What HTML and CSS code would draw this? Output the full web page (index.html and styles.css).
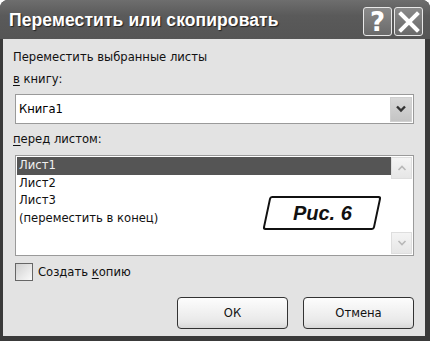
FILE: index.html
```html
<!DOCTYPE html>
<html lang="ru">
<head>
  <meta charset="UTF-8" />
  <title>Переместить или скопировать</title>
  <link rel="stylesheet" href="styles.css">
</head>
<body>

<div class="window">
  <!-- Заголовок -->
  <div class="titlebar">
    <span class="title">Переместить или скопировать</span>
    <div class="title-btns">
      <span class="tbtn">?</span>
      <span class="tbtn">
        <svg width="22" height="22" viewBox="0 0 22 22"><path d="M3 3 L19 19 M19 3 L3 19" stroke="#fff" stroke-width="4" stroke-linecap="square"/></svg>
      </span>
    </div>
  </div>

  <div class="client">
    <p class="label">Переместить выбранные листы</p>
    <p class="label"><u>в</u> книгу:</p>

    <div class="combo">
      <span class="combo-text">Книга1</span>
      <span class="combo-btn">
        <svg width="12" height="8" viewBox="0 0 12 8"><path d="M2 1.5 L6 5.5 L10 1.5" fill="none" stroke="#333" stroke-width="2.4"/></svg>
      </span>
    </div>

    <p class="label"><u>п</u>еред листом:</p>

    <div class="listbox">
      <ul class="items">
        <li class="selected">Лист1</li>
        <li>Лист2</li>
        <li>Лист3</li>
        <li>(переместить в конец)</li>
      </ul>
      <div class="scrollbar">
        <span class="sbtn">
          <svg width="10" height="6" viewBox="0 0 10 6"><path d="M1.5 5 L5 1.5 L8.5 5" fill="none" stroke="#b8b8b8" stroke-width="1.6"/></svg>
        </span>
        <span class="sbtn">
          <svg width="10" height="6" viewBox="0 0 10 6"><path d="M1.5 1 L5 4.5 L8.5 1" fill="none" stroke="#b8b8b8" stroke-width="1.6"/></svg>
        </span>
      </div>
      <div class="badge"><span>Рис. 6</span></div>
    </div>

    <label class="check">
      <span class="box"></span>
      <span>Создать <u>к</u>опию</span>
    </label>

    <div class="btn-row">
      <button class="btn">ОК</button>
      <button class="btn">Отмена</button>
    </div>
  </div>
</div>

</body>
</html>
```

FILE: styles.css
```css
* { margin: 0; padding: 0; box-sizing: border-box; }

body {
  background: #fff;
  font-family: 'DejaVu Sans', sans-serif;
  width: 430px;
  height: 341px;
  overflow: hidden;
}

.window {
  width: 430px;
  height: 341px;
  background: #3a3a3a;
  border-radius: 8px 8px 0 0;
  padding: 0 5px 5px 3px;
  display: flex;
  flex-direction: column;
}

.titlebar {
  height: 39px;
  margin: 0 -5px 0 -3px;
  padding: 0 7px 0 9px;
  border-radius: 8px 8px 0 0;
  background: linear-gradient(#6e6e6e, #5a5a5a 40%, #555 100%);
  display: flex;
  align-items: center;
  justify-content: space-between;
}

.title {
  color: #fff;
  font-family: 'Liberation Sans', sans-serif;
  font-size: 17.5px;
  font-weight: bold;
  letter-spacing: 0.1px;
  text-shadow: 1px 1px 1px #222;
  padding-top: 2px;
}

.title-btns {
  display: flex;
  gap: 2px;
  padding-top: 4px;
}

.tbtn {
  width: 29px;
  height: 29px;
  border: 1px solid #e8e8e8;
  border-radius: 3px;
  background: linear-gradient(#8a8a8a, #6a6a6a);
  color: #fff;
  font-size: 26px;
  font-weight: bold;
  display: flex;
  align-items: center;
  justify-content: center;
  line-height: 1;
}

.client {
  flex: 1;
  background: #e3e3e3;
  padding: 11px 9px 0 9px;
  display: flex;
  flex-direction: column;
}

.label {
  font-size: 11.6px;
  color: #111;
  height: 22px;
  padding-left: 1px;
}

.label u { text-underline-offset: 2px; }

.combo {
  height: 30px;
  margin: 0 2px 8px 3px;
  border: 1px solid #9a9a9a;
  background: #fff;
  display: flex;
  align-items: center;
  justify-content: space-between;
  padding: 0 1px 0 3px;
  font-size: 11.6px;
}

.combo-btn {
  width: 22px;
  height: 25px;
  background: linear-gradient(#d8d8d8, #c4c4c4);
  border: 1px solid #cfcfcf;
  display: flex;
  align-items: center;
  justify-content: center;
}

.listbox {
  position: relative;
  height: 101px;
  margin: 1px 2px 0 3px;
  border: 1px solid #9a9a9a;
  background: #fff;
  display: flex;
  padding: 1px;
}

.items {
  list-style: none;
  flex: 1;
  font-size: 11.6px;
  color: #111;
}

.items li {
  height: 17.5px;
  line-height: 17px;
  padding-left: 2px;
}

.items li.selected {
  background: #555;
  color: #f0f0f0;
}

.scrollbar {
  width: 21px;
  display: flex;
  flex-direction: column;
  justify-content: space-between;
}

.sbtn {
  height: 22px;
  background: linear-gradient(#f4f4f4, #e6e6e6);
  border: 1px solid #dedede;
  display: flex;
  align-items: center;
  justify-content: center;
}

.badge {
  position: absolute;
  left: 250px;
  top: 40px;
  width: 112px;
  height: 34px;
  border: 2px solid #111;
  border-radius: 3px;
  background: #fff;
  transform: skewX(-12deg);
  display: flex;
  align-items: center;
  justify-content: center;
}

.badge span {
  transform: skewX(12deg);
  font-family: 'Liberation Sans', sans-serif;
  font-size: 20px;
  font-weight: bold;
  font-style: italic;
  color: #111;
}

.check {
  display: flex;
  align-items: center;
  gap: 5px;
  margin: 7px 0 0 3px;
  font-size: 11.6px;
  color: #111;
}

.check u { text-underline-offset: 2px; }

.check .box {
  width: 18px;
  height: 18px;
  border: 1px solid #666;
  background: linear-gradient(135deg, #d0d0d0, #fafafa);
}

.btn-row {
  display: flex;
  justify-content: flex-end;
  gap: 15px;
  margin: 16px 2px 0 0;
}

.btn {
  width: 111px;
  height: 32px;
  border: 1px solid #333;
  border-radius: 4px;
  background: linear-gradient(#fdfdfd, #e8e8e8 80%, #d8d8d8);
  font-family: 'DejaVu Sans', sans-serif;
  font-size: 11.6px;
  color: #111;
}
```
